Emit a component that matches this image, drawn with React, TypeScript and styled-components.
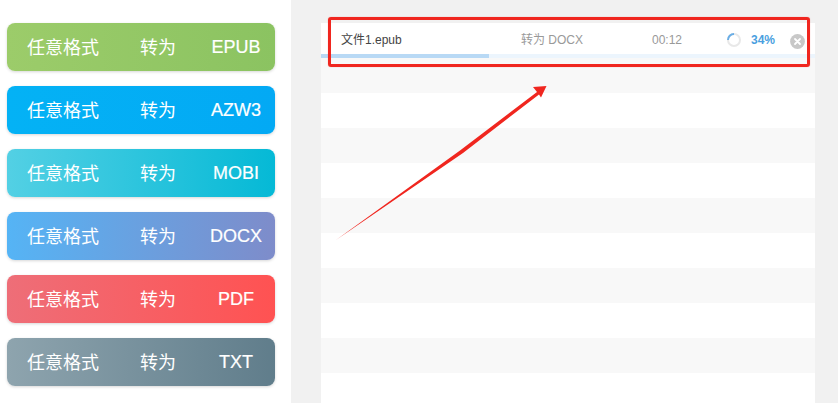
import React from "react";
import styled, { createGlobalStyle } from "styled-components";

const Global = createGlobalStyle`
  html, body { margin: 0; padding: 0; height: 100%; overflow: hidden; background: #f1f1f1; }
  #root { height: 100%; }
`;

const Page = styled.div`
  position: relative;
  display: flex;
  width: 838px;
  height: 403px;
  overflow: hidden;
  font-family: "Liberation Sans", "Noto Sans CJK SC", sans-serif;
`;

const Sidebar = styled.div`
  width: 291px;
  height: 403px;
  flex: none;
  box-sizing: border-box;
  background: #fff;
  padding: 23px 0 0 7px;
  display: flex;
  flex-direction: column;
  gap: 15px;
`;

const FormatButton = styled.div<{ $from: string; $to: string }>`
  width: 268px;
  height: 48px;
  flex: none;
  box-sizing: border-box;
  border-radius: 8px;
  background: linear-gradient(to right, ${(p) => p.$from}, ${(p) => p.$to});
  box-shadow: 0 1px 3px rgba(0, 0, 0, 0.16);
  color: #fff;
  display: flex;
  align-items: center;
  font-size: 18px;
`;

const Source = styled.span`
  width: 72px;
  margin-left: 20px;
  padding-bottom: 2px;
  white-space: nowrap;
`;

const Verb = styled.span`
  width: 36px;
  margin-left: 41px;
  padding-bottom: 2px;
  white-space: nowrap;
`;

const Target = styled.span`
  width: 72px;
  margin-left: 24px;
  text-align: center;
  white-space: nowrap;
  -webkit-text-stroke: 0.2px #fff;
`;

const Main = styled.div`
  flex: 1;
  padding: 23px 23px 0 30px;
`;

const Panel = styled.div`
  width: 494px;
  display: flex;
  flex-direction: column;
`;

const TaskRow = styled.div`
  position: relative;
  height: 35px;
  flex: none;
  background: #fff;
  display: flex;
  align-items: center;
  box-sizing: border-box;
  padding: 2px 0 3px;
  font-size: 12px;
  line-height: 16px;
  color: #999;
`;

const FileName = styled.span`
  width: 180px;
  margin-left: 20px;
  color: #444;
`;

const Convert = styled.span`
  width: 131px;
`;

const Time = styled.span`
  width: 75px;
`;

const Spinner = styled.svg`
  width: 14px;
  height: 14px;
  flex: none;
  margin-bottom: 1px;
`;

const Percent = styled.span`
  width: 39px;
  margin-left: 10px;
  color: #4a9fe0;
  font-weight: bold;
`;

const CloseIcon = styled.svg`
  width: 15px;
  height: 15px;
  flex: none;
  margin-top: 2px;
`;

const Track = styled.div`
  position: absolute;
  left: 0;
  right: 0;
  bottom: 0;
  height: 4px;
  background: #ecf5fd;
`;

const Fill = styled.div`
  height: 100%;
  background: #b8d9f5;
`;

const StripeRow = styled.div<{ $alt: boolean }>`
  height: 35px;
  flex: none;
  background: ${(p) => (p.$alt ? "#f8f8f8" : "#fff")};
`;

const Highlight = styled.div`
  position: absolute;
  left: 328px;
  top: 17px;
  width: 482px;
  height: 50px;
  box-sizing: border-box;
  border: 3px solid #f0261f;
  border-radius: 3px;
  box-shadow: 0 0 1px rgba(240, 38, 31, 0.5);
  pointer-events: none;
`;

const Arrow = styled.svg`
  position: absolute;
  left: 330px;
  top: 80px;
  width: 225px;
  height: 165px;
  pointer-events: none;
`;

const formats = [
  { name: "EPUB", from: "#9ccc6a", to: "#8bc361" },
  { name: "AZW3", from: "#04b2f5", to: "#03a9f4" },
  { name: "MOBI", from: "#53d0e4", to: "#05b9d6" },
  { name: "DOCX", from: "#55b4f5", to: "#7e8cca" },
  { name: "PDF", from: "#ee6e78", to: "#ff5252" },
  { name: "TXT", from: "#8ea4ae", to: "#607d8b" },
];

export default function App() {
  return (
    <Page>
      <Global />
      <Sidebar>
        {formats.map((f) => (
          <FormatButton key={f.name} $from={f.from} $to={f.to}>
            <Source>任意格式</Source>
            <Verb>转为</Verb>
            <Target>{f.name}</Target>
          </FormatButton>
        ))}
      </Sidebar>
      <Main>
        <Panel>
          <TaskRow>
            <FileName>文件1.epub</FileName>
            <Convert>转为 DOCX</Convert>
            <Time>00:12</Time>
            <Spinner viewBox="0 0 14 14">
              <circle cx="7" cy="7" r="6" fill="none" stroke="#e8e8e8" strokeWidth="2" />
              <path d="M1 7A6 6 0 0 1 7 1" fill="none" stroke="#6aaee6" strokeWidth="2" />
            </Spinner>
            <Percent>34%</Percent>
            <CloseIcon viewBox="0 0 15 15">
              <circle cx="7.5" cy="7.5" r="7.4" fill="#c8c8c8" />
              <path d="M5 5l5 5M10 5l-5 5" stroke="#fff" strokeWidth="1.8" strokeLinecap="round" />
            </CloseIcon>
            <Track>
              <Fill style={{ width: "34%" }} />
            </Track>
          </TaskRow>
          {Array.from({ length: 10 }, (_, i) => (
            <StripeRow key={i} $alt={i % 2 === 0} />
          ))}
        </Panel>
      </Main>
      <Highlight />
      <Arrow viewBox="330 80 225 165">
        <path
          d="M336 240L460 150.5L537 92L533 87L546.5 86L541 97.5L539 94.5L463 153Z"
          fill="#f0261f"
        />
      </Arrow>
    </Page>
  );
}
